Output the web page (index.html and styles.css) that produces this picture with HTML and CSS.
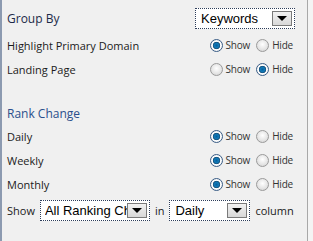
FILE: index.html
```html
<!DOCTYPE html>
<html lang="en">
<head>
    <meta charset="UTF-8">
    <title>Report Options</title>
    <link rel="stylesheet" href="styles.css">
</head>
<body>
    <div class="panel">
        <div class="row first">
            <span class="label group-by">Group By</span>
            <div class="select wide">
                <span class="select-text">Keywords</span>
                <span class="arrow-btn"><span class="arrow"></span></span>
            </div>
        </div>

        <div class="row">
            <span class="label">Highlight Primary Domain</span>
            <div class="radios">
                <span class="radio checked"></span><span class="radio-label">Show</span>
                <span class="radio"></span><span class="radio-label">Hide</span>
            </div>
        </div>

        <div class="row">
            <span class="label">Landing Page</span>
            <div class="radios">
                <span class="radio"></span><span class="radio-label">Show</span>
                <span class="radio checked"></span><span class="radio-label">Hide</span>
            </div>
        </div>

        <div class="row heading-row">
            <span class="label heading">Rank Change</span>
        </div>

        <div class="row">
            <span class="label">Daily</span>
            <div class="radios">
                <span class="radio checked"></span><span class="radio-label">Show</span>
                <span class="radio"></span><span class="radio-label">Hide</span>
            </div>
        </div>

        <div class="row">
            <span class="label">Weekly</span>
            <div class="radios">
                <span class="radio checked"></span><span class="radio-label">Show</span>
                <span class="radio"></span><span class="radio-label">Hide</span>
            </div>
        </div>

        <div class="row">
            <span class="label">Monthly</span>
            <div class="radios">
                <span class="radio checked"></span><span class="radio-label">Show</span>
                <span class="radio"></span><span class="radio-label">Hide</span>
            </div>
        </div>

        <div class="row show-row">
            <span class="label">Show</span>
            <div class="select ranking">
                <span class="select-text">All Ranking Ch</span>
                <span class="arrow-btn"><span class="arrow"></span></span>
            </div>
            <span class="label">in</span>
            <div class="select period">
                <span class="select-text">Daily</span>
                <span class="arrow-btn"><span class="arrow"></span></span>
            </div>
            <span class="label">column</span>
        </div>
    </div>
</body>
</html>
```

FILE: styles.css
```css
body {
    margin: 0;
    padding: 0;
    background: #f4f4f4;
    font-family: "Open Sans", "Liberation Sans", sans-serif;
}

.panel {
    width: 308px;
    height: 241px;
    box-sizing: border-box;
    background: #f0f0f0;
    border-left: 2px solid #8c9ab0;
    border-right: 1px solid #a8a8a8;
    padding: 6px 12px 0 5px;
}

.row {
    display: flex;
    align-items: center;
    justify-content: space-between;
    height: 24px;
}

.first {
    margin-bottom: 3px;
}

.label {
    font-size: 11px;
    color: #1b1b1b;
    white-space: nowrap;
}

.group-by {
    font-size: 12px;
    color: #1c2a48;
}

.heading-row {
    height: 22px;
    margin-top: 21px;
}

.heading {
    font-size: 12px;
    color: #2a4f8c;
}

.radios {
    display: flex;
    align-items: center;
    padding-right: 2px;
}

.radio {
    width: 13px;
    height: 13px;
    box-sizing: border-box;
    border-radius: 50%;
    border: 1px solid #9a9a9a;
    background: radial-gradient(circle at 50% 40%, #ffffff 0%, #e6e6e6 55%, #cfcfcf 100%);
}

.radio.checked {
    border-color: #3a5d86;
    background: radial-gradient(circle at 50% 50%, #0a5f9c 0, #0f7ab8 28%, #1a4f78 44%, #ffffff 52%, #d9dde3 100%);
}

.radio-label {
    font-size: 10px;
    color: #333;
    margin: 0 6px 0 3px;
    letter-spacing: -0.2px;
}

.radio-label:last-child {
    margin-right: 0;
}

.select {
    display: flex;
    align-items: center;
    height: 21px;
    box-sizing: border-box;
    border: 1px dotted #2d3d5a;
    background: #ffffff;
    padding: 0 2px 0 5px;
    overflow: hidden;
}

.select-text {
    flex: 1;
    font-family: "Liberation Sans", Arial, sans-serif;
    font-size: 13px;
    color: #000;
    white-space: nowrap;
    overflow: hidden;
}

.arrow-btn {
    display: flex;
    align-items: center;
    justify-content: center;
    width: 20px;
    height: 15px;
    flex-shrink: 0;
    box-sizing: border-box;
    border: 1px solid #7a7a7a;
    background: linear-gradient(#f2f2f2, #d8d8d8);
}

.arrow {
    width: 0;
    height: 0;
    border-left: 5px solid transparent;
    border-right: 5px solid transparent;
    border-top: 5px solid #000;
}

.wide {
    width: 100px;
}

.show-row {
    margin-top: 2px;
    justify-content: flex-start;
    gap: 5px;
}

.ranking {
    width: 110px;
    padding-left: 4px;
}

.ranking .select-text {
    margin-right: -8px;
}

.period {
    width: 81px;
}
```
